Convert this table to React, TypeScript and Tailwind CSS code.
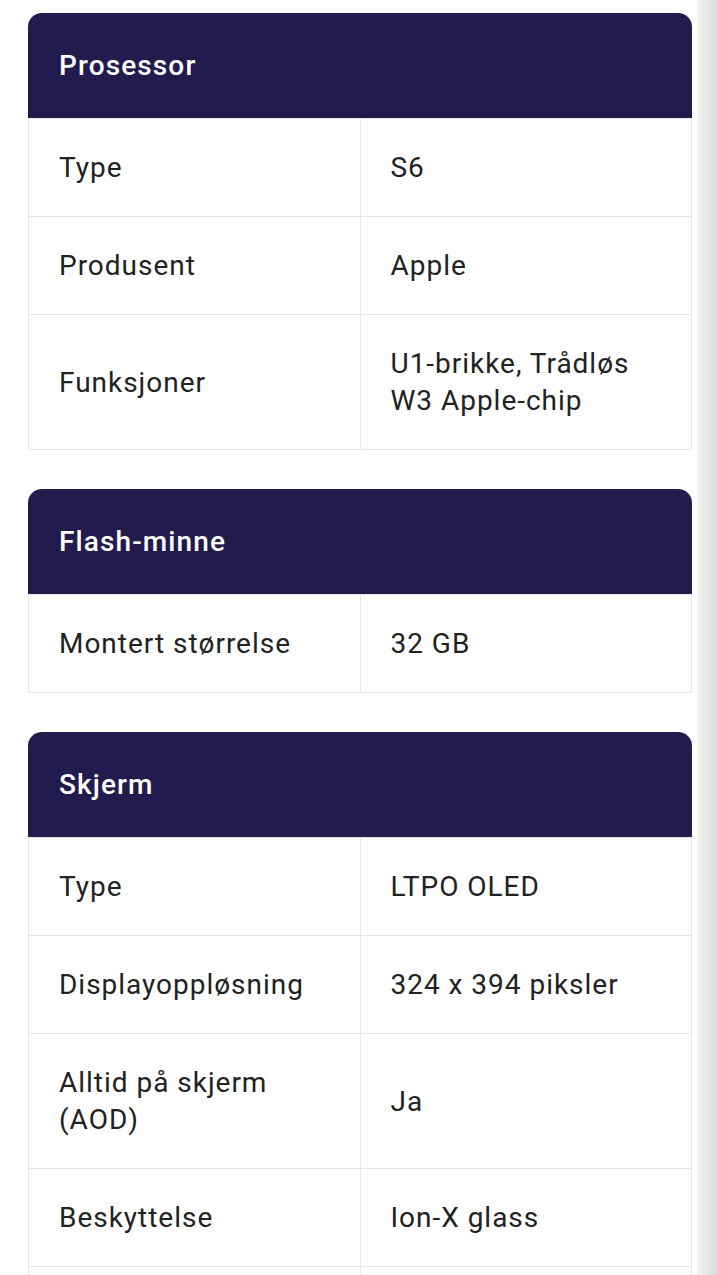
const sections = [
  {
    title: "Prosessor",
    rows: [
      ["Type", "S6"],
      ["Produsent", "Apple"],
      ["Funksjoner", "U1-brikke, Trådløs W3 Apple-chip"],
    ],
  },
  {
    title: "Flash-minne",
    rows: [["Montert størrelse", "32 GB"]],
  },
  {
    title: "Skjerm",
    rows: [
      ["Type", "LTPO OLED"],
      ["Displayoppløsning", "324 x 394 piksler"],
      ["Alltid på skjerm (AOD)", "Ja"],
      ["Beskyttelse", "Ion-X glass"],
      ["Skjermstørrelse", "1,9 tommer"],
    ],
  },
];

function SpecCard({ title, rows }: { title: string; rows: string[][] }) {
  return (
    <div className="mb-[39px]">
      <div className="h-[105px] rounded-t-[14px] bg-[#221b4d] pl-[31px] flex items-center">
        <h2 className="text-[28px] font-medium tracking-[0.04em] text-white leading-none">
          {title}
        </h2>
      </div>
      <table className="w-full table-fixed border-collapse">
        <tbody>
          {rows.map(([label, value]) => (
            <tr key={label}>
              <td className="w-1/2 border border-[#e6e6e6] px-[30px] py-[30px] align-middle text-[28px] leading-[37px] tracking-[0.035em] text-[#222]">
                {label}
              </td>
              <td className="w-1/2 border border-[#e6e6e6] px-[30px] py-[30px] align-middle text-[28px] leading-[37px] tracking-[0.035em] text-[#222]">
                {value}
              </td>
            </tr>
          ))}
        </tbody>
      </table>
    </div>
  );
}

export default function App() {
  return (
    <div
      className="flex h-[1275px] overflow-hidden bg-white"
      style={{ fontFamily: "Roboto, 'Noto Sans', sans-serif" }}
    >
      <div className="w-[697px] shrink-0 pl-[28px] pr-[5px] pt-[13px]">
        {sections.map((s) => (
          <SpecCard key={s.title} title={s.title} rows={s.rows} />
        ))}
      </div>
      <div className="flex-1 bg-gradient-to-r from-[#f3f3f3] to-[#d9d9d9]" />
    </div>
  );
}
